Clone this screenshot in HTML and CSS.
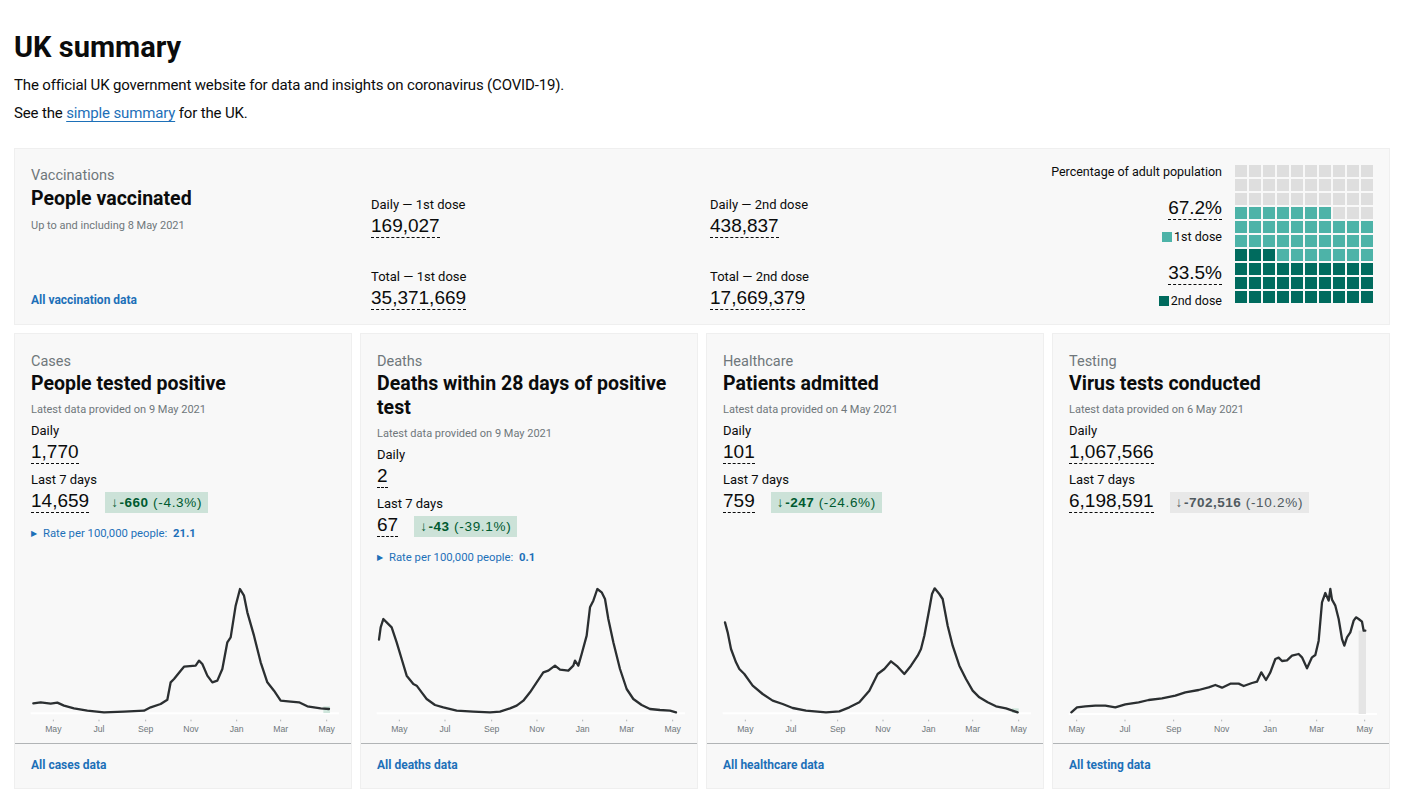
FILE: index.html
```html
<!DOCTYPE html>
<html lang="en">
<head>
<meta charset="utf-8">
<title>UK summary</title>
<link rel="stylesheet" href="styles.css">
</head>
<body>
<main class="page">
  <h1 class="page-title">UK summary</h1>
  <p class="lead">The official UK government website for data and insights on coronavirus (COVID-19).</p>
  <p class="lead">See the <a href="#" class="text-link">simple summary</a> for the UK.</p>

  <section class="vax-card">
    <div class="vax-info">
      <div class="category">Vaccinations</div>
      <h2 class="card-title">People vaccinated</h2>
      <div class="date-note">Up to and including 8 May 2021</div>
      <a href="#" class="more-link vax-link">All vaccination data</a>
    </div>
    <div class="vax-col">
      <div class="metric-label">Daily — 1st dose</div>
      <div><span class="num">169,027</span></div>
      <div class="metric-label spaced">Total — 1st dose</div>
      <div><span class="num">35,371,669</span></div>
    </div>
    <div class="vax-col">
      <div class="metric-label">Daily — 2nd dose</div>
      <div><span class="num">438,837</span></div>
      <div class="metric-label spaced">Total — 2nd dose</div>
      <div><span class="num">17,669,379</span></div>
    </div>
    <div class="waffle-col">
      <div class="waffle-labels">
        <div class="wl-title">Percentage of adult population</div>
        <div class="wl-pct first"><span class="num">67.2%</span></div>
        <div class="wl-key first-key"><span class="swatch light"></span>1st dose</div>
        <div class="wl-pct second"><span class="num">33.5%</span></div>
        <div class="wl-key second-key"><span class="swatch dark"></span>2nd dose</div>
      </div>
      <div class="waffle">
        <i class="g"></i><i class="g"></i><i class="g"></i><i class="g"></i><i class="g"></i><i class="g"></i><i class="g"></i><i class="g"></i><i class="g"></i><i class="g"></i>
        <i class="g"></i><i class="g"></i><i class="g"></i><i class="g"></i><i class="g"></i><i class="g"></i><i class="g"></i><i class="g"></i><i class="g"></i><i class="g"></i>
        <i class="g"></i><i class="g"></i><i class="g"></i><i class="g"></i><i class="g"></i><i class="g"></i><i class="g"></i><i class="g"></i><i class="g"></i><i class="g"></i>
        <i class="l"></i><i class="l"></i><i class="l"></i><i class="l"></i><i class="l"></i><i class="l"></i><i class="l"></i><i class="g"></i><i class="g"></i><i class="g"></i>
        <i class="l"></i><i class="l"></i><i class="l"></i><i class="l"></i><i class="l"></i><i class="l"></i><i class="l"></i><i class="l"></i><i class="l"></i><i class="l"></i>
        <i class="l"></i><i class="l"></i><i class="l"></i><i class="l"></i><i class="l"></i><i class="l"></i><i class="l"></i><i class="l"></i><i class="l"></i><i class="l"></i>
        <i class="d"></i><i class="d"></i><i class="d"></i><i class="l"></i><i class="l"></i><i class="l"></i><i class="l"></i><i class="l"></i><i class="l"></i><i class="l"></i>
        <i class="d"></i><i class="d"></i><i class="d"></i><i class="d"></i><i class="d"></i><i class="d"></i><i class="d"></i><i class="d"></i><i class="d"></i><i class="d"></i>
        <i class="d"></i><i class="d"></i><i class="d"></i><i class="d"></i><i class="d"></i><i class="d"></i><i class="d"></i><i class="d"></i><i class="d"></i><i class="d"></i>
        <i class="d"></i><i class="d"></i><i class="d"></i><i class="d"></i><i class="d"></i><i class="d"></i><i class="d"></i><i class="d"></i><i class="d"></i><i class="d"></i>
      </div>
    </div>
  </section>

  <section class="cards">
    <article class="card">
      <div class="card-body">
        <div class="category">Cases</div>
        <h2 class="card-title">People tested positive</h2>
        <div class="date-note">Latest data provided on 9 May 2021</div>
        <div class="metric-label gap-s">Daily</div>
        <div><span class="num">1,770</span></div>
        <div class="metric-label gap-m">Last 7 days</div>
        <div class="num-row"><span class="num">14,659</span><span class="change good"><span class="arrow">↓</span><b>-660</b> (-4.3%)</span></div>
        <div class="rate"><span class="tri">▶</span>Rate per 100,000 people: <b>21.1</b></div>
      </div>
      <svg class="chart" width="336" height="170" viewBox="0 0 336 170">
        <g transform="translate(-1,-4) scale(0.33333)">
          <line class="base" x1="50" y1="433" x2="975" y2="433"/>
          <rect class="recent" x="928" y="412" width="20" height="20"/>
          <polyline class="series" points="58,403 80,400 110,404 130,401 150,410 180,418 220,425 270,430 330,428 390,425 410,415 440,405 460,392 470,340 480,330 500,305 510,293 545,290 555,275 565,285 580,320 595,340 610,335 625,300 640,220 650,205 665,110 678,60 690,80 700,130 720,200 740,280 760,340 780,365 800,395 830,398 855,400 880,412 920,418 945,420"/>
          <g class="ticks"><line x1="118" y1="452" x2="118" y2="457"/><line x1="255" y1="452" x2="255" y2="457"/><line x1="395" y1="452" x2="395" y2="457"/><line x1="531" y1="452" x2="531" y2="457"/><line x1="668" y1="452" x2="668" y2="457"/><line x1="800" y1="452" x2="800" y2="457"/><line x1="938" y1="452" x2="938" y2="457"/></g>
          <g class="axis"><text x="118" y="489">May</text><text x="255" y="489">Jul</text><text x="395" y="489">Sep</text><text x="531" y="489">Nov</text><text x="668" y="489">Jan</text><text x="800" y="489">Mar</text><text x="938" y="489">May</text></g>
        </g>
      </svg>
      <div class="card-foot"><a href="#" class="more-link">All cases data</a></div>
    </article>

    <article class="card">
      <div class="card-body">
        <div class="category">Deaths</div>
        <h2 class="card-title">Deaths within 28 days of positive test</h2>
        <div class="date-note">Latest data provided on 9 May 2021</div>
        <div class="metric-label gap-s">Daily</div>
        <div><span class="num">2</span></div>
        <div class="metric-label gap-m">Last 7 days</div>
        <div class="num-row"><span class="num">67</span><span class="change good"><span class="arrow">↓</span><b>-43</b> (-39.1%)</span></div>
        <div class="rate"><span class="tri">▶</span>Rate per 100,000 people: <b>0.1</b></div>
      </div>
      <svg class="chart" width="336" height="170" viewBox="0 0 336 170">
        <g transform="translate(-1,-4) scale(0.33333)">
          <line class="base" x1="50" y1="433" x2="975" y2="433"/>
          <polyline class="series" points="57,212 62,175 70,150 80,160 95,175 110,220 125,270 140,320 160,345 170,350 185,370 200,390 225,408 250,415 290,425 340,428 390,430 420,428 450,418 470,410 490,395 510,370 530,340 550,310 565,305 585,290 600,302 625,305 640,290 645,275 655,290 665,255 680,200 690,115 700,95 712,60 725,70 735,90 745,150 760,220 780,300 800,360 820,390 845,408 870,420 900,423 930,425 948,430"/>
          <g class="ticks"><line x1="118" y1="452" x2="118" y2="457"/><line x1="255" y1="452" x2="255" y2="457"/><line x1="395" y1="452" x2="395" y2="457"/><line x1="531" y1="452" x2="531" y2="457"/><line x1="668" y1="452" x2="668" y2="457"/><line x1="800" y1="452" x2="800" y2="457"/><line x1="938" y1="452" x2="938" y2="457"/></g>
          <g class="axis"><text x="118" y="489">May</text><text x="255" y="489">Jul</text><text x="395" y="489">Sep</text><text x="531" y="489">Nov</text><text x="668" y="489">Jan</text><text x="800" y="489">Mar</text><text x="938" y="489">May</text></g>
        </g>
      </svg>
      <div class="card-foot"><a href="#" class="more-link">All deaths data</a></div>
    </article>

    <article class="card">
      <div class="card-body">
        <div class="category">Healthcare</div>
        <h2 class="card-title">Patients admitted</h2>
        <div class="date-note">Latest data provided on 4 May 2021</div>
        <div class="metric-label gap-s">Daily</div>
        <div><span class="num">101</span></div>
        <div class="metric-label gap-m">Last 7 days</div>
        <div class="num-row"><span class="num">759</span><span class="change good"><span class="arrow">↓</span><b>-247</b> (-24.6%)</span></div>
      </div>
      <svg class="chart" width="336" height="170" viewBox="0 0 336 170">
        <g transform="translate(-1,-4) scale(0.33333)">
          <line class="base" x1="50" y1="433" x2="975" y2="433"/>
          <rect class="recent" x="918" y="418" width="20" height="14"/>
          <polyline class="series" points="57,160 65,190 75,240 90,280 100,300 115,315 140,350 170,375 200,395 230,405 260,417 300,425 360,430 400,427 430,415 460,400 490,365 515,315 535,300 555,277 575,293 595,315 615,290 635,260 645,240 655,200 670,120 678,75 686,58 700,75 710,90 725,170 740,230 760,290 780,330 800,365 820,385 845,400 870,412 900,418 935,430"/>
          <g class="ticks"><line x1="118" y1="452" x2="118" y2="457"/><line x1="255" y1="452" x2="255" y2="457"/><line x1="395" y1="452" x2="395" y2="457"/><line x1="531" y1="452" x2="531" y2="457"/><line x1="668" y1="452" x2="668" y2="457"/><line x1="800" y1="452" x2="800" y2="457"/><line x1="938" y1="452" x2="938" y2="457"/></g>
          <g class="axis"><text x="118" y="489">May</text><text x="255" y="489">Jul</text><text x="395" y="489">Sep</text><text x="531" y="489">Nov</text><text x="668" y="489">Jan</text><text x="800" y="489">Mar</text><text x="938" y="489">May</text></g>
        </g>
      </svg>
      <div class="card-foot"><a href="#" class="more-link">All healthcare data</a></div>
    </article>

    <article class="card">
      <div class="card-body">
        <div class="category">Testing</div>
        <h2 class="card-title">Virus tests conducted</h2>
        <div class="date-note">Latest data provided on 6 May 2021</div>
        <div class="metric-label gap-s">Daily</div>
        <div><span class="num">1,067,566</span></div>
        <div class="metric-label gap-m">Last 7 days</div>
        <div class="num-row"><span class="num">6,198,591</span><span class="change neutral"><span class="arrow">↓</span><b>-702,516</b> (-10.2%)</span></div>
      </div>
      <svg class="chart" width="336" height="170" viewBox="0 0 336 170">
        <g transform="translate(-1,-4) scale(0.33333)">
          <line class="base" x1="50" y1="435" x2="975" y2="435"/>
          <rect class="incomplete" x="920" y="185" width="22" height="250"/>
          <polyline class="series" points="58,430 75,415 100,412 130,410 160,410 190,415 200,412 220,406 260,400 290,393 330,388 370,380 400,370 440,363 470,355 490,348 510,356 535,344 560,344 575,351 600,342 615,338 628,310 642,333 655,310 670,270 680,266 690,276 705,274 720,260 740,255 750,265 765,298 780,265 790,258 800,215 810,100 820,72 830,95 835,60 840,92 850,110 860,150 870,210 877,230 885,205 895,190 905,155 912,145 920,150 930,158 935,185 940,185"/>
          <g class="ticks"><line x1="74" y1="452" x2="74" y2="457"/><line x1="219" y1="452" x2="219" y2="457"/><line x1="365" y1="452" x2="365" y2="457"/><line x1="509" y1="452" x2="509" y2="457"/><line x1="654" y1="452" x2="654" y2="457"/><line x1="794" y1="452" x2="794" y2="457"/><line x1="938" y1="452" x2="938" y2="457"/></g>
          <g class="axis"><text x="74" y="489">May</text><text x="219" y="489">Jul</text><text x="365" y="489">Sep</text><text x="509" y="489">Nov</text><text x="654" y="489">Jan</text><text x="794" y="489">Mar</text><text x="938" y="489">May</text></g>
        </g>
      </svg>
      <div class="card-foot"><a href="#" class="more-link">All testing data</a></div>
    </article>
  </section>
</main>
</body>
</html>
```
FILE: styles.css
```css
* { box-sizing: border-box; }
html, body { margin: 0; padding: 0; background: #fff; }
body {
  font-family: Roboto, "Liberation Sans", Arial, sans-serif;
  color: #0b0c0c;
}
.page { padding: 0 36px 0 14px; }

.page-title {
  margin: 0;
  padding-top: 30px;
  font-size: 29px;
  line-height: 34px;
  font-weight: 700;
}
.lead {
  margin: 0;
  font-size: 15px;
  line-height: 20px;
  letter-spacing: -0.15px;
}
.page-title + .lead { margin-top: 11px; }
.lead + .lead { margin-top: 8px; }
.text-link { color: #1d70b8; text-decoration: underline; text-underline-offset: 3px; }

/* shared */
.category { font-size: 14.5px; line-height: 20px; color: #6f777b; }
.card-title { margin: 0; font-size: 19.5px; line-height: 24px; font-weight: 700; }
.date-note { margin-top: 4px; font-size: 11px; line-height: 20px; color: #6f777b; }
.metric-label { font-size: 13px; line-height: 20px; }
.num {
  display: inline-block;
  font-family: "Liberation Sans", Arial, sans-serif;
  font-size: 19px;
  line-height: 22px;
  border-bottom: 1px dashed #0b0c0c;
}
.more-link { color: #1d70b8; font-weight: 700; font-size: 12px; line-height: 20px; text-decoration: none; }

/* vaccination card */
.vax-card {
  margin-top: 25px;
  display: grid;
  grid-template-columns: 340px 339px 340px 1fr;
  background: #f8f8f8;
  border: 1px solid #efefef;
  padding: 17px 16px 14px 16px;
  height: 177px;
}
.vax-info { display: flex; flex-direction: column; }
.vax-info .card-title { margin-top: 1px; }
.vax-info .date-note { margin-top: 5px; }
.vax-link { margin-top: auto; margin-bottom: 0; }
.vax-col { padding-top: 29px; }
.vax-col .spaced { margin-top: 29px; }

.waffle-col { display: flex; justify-content: flex-end; gap: 13px; margin-top: -1px; }
.waffle-labels { display: flex; flex-direction: column; align-items: flex-end; font-size: 12.5px; line-height: 16px; }
.wl-title { margin-top: -1px; }
.wl-pct.first { margin-top: 17px; }
.wl-key { display: flex; align-items: center; gap: 2px; }
.first-key { margin-top: 9px; }
.wl-pct.second { margin-top: 17px; }
.second-key { margin-top: 8px; }
.swatch { width: 10px; height: 10px; display: inline-block; }
.swatch.light { background: #4db3a8; }
.swatch.dark { background: #006b5e; }
.waffle {
  display: grid;
  grid-template-columns: repeat(10, 12px);
  grid-auto-rows: 12px;
  gap: 2px;
  width: 138px;
  height: 138px;
}
.waffle i { display: block; }
.waffle .g { background: #dedede; }
.waffle .l { background: #4db3a8; }
.waffle .d { background: #006b5e; }

/* metric cards */
.cards {
  margin-top: 8px;
  display: grid;
  grid-template-columns: repeat(4, 338px);
  gap: 8px;
}
.card {
  background: #f8f8f8;
  border: 1px solid #efefef;
  height: 456px;
  display: flex;
  flex-direction: column;
}
.card-body { padding: 18px 16px 0 16px; }
.gap-s { margin-top: 1px; }
.gap-m { margin-top: 6px; }
.num-row { display: flex; align-items: flex-end; gap: 16px; }
.change {
  font-family: "Liberation Sans", Arial, sans-serif;
  font-size: 13.5px;
  line-height: 21px;
  padding: 0 6px;
  letter-spacing: 0.7px;
  margin-bottom: 0;
}
.change b { font-weight: 700; letter-spacing: 0.5px; }
.change .arrow { margin-right: 1px; font-weight: 700; }
.change.good { background: #cce2d8; color: #005a30; }
.change.neutral { background: #e8e8e8; color: #505a5f; }
.rate { margin-top: 13px; font-size: 11.3px; line-height: 16px; color: #1d70b8; }
.rate .tri { font-size: 8px; margin-right: 6px; display: inline-block; vertical-align: 1px; }
.rate b { color: #1d70b8; margin-left: 3px; }

.chart { display: block; margin-top: auto; overflow: visible; }
.chart .series { fill: none; stroke: #2b2f31; stroke-width: 2.3; vector-effect: non-scaling-stroke; stroke-linejoin: round; stroke-linecap: round; }
.chart .base { stroke: #ffffff; stroke-width: 2; vector-effect: non-scaling-stroke; }
.chart .ticks line { stroke: #b1b4b6; stroke-width: 1; vector-effect: non-scaling-stroke; }
.chart .axis text { font-family: "Liberation Sans", Arial, sans-serif; font-size: 26px; fill: #6f777b; text-anchor: middle; }
.chart .recent { fill: #cfe6dc; }
.chart .incomplete { fill: #e5e5e5; }

.card-foot { border-top: 1px solid #b1b4b6; padding: 10px 16px 13px 16px; }
```
